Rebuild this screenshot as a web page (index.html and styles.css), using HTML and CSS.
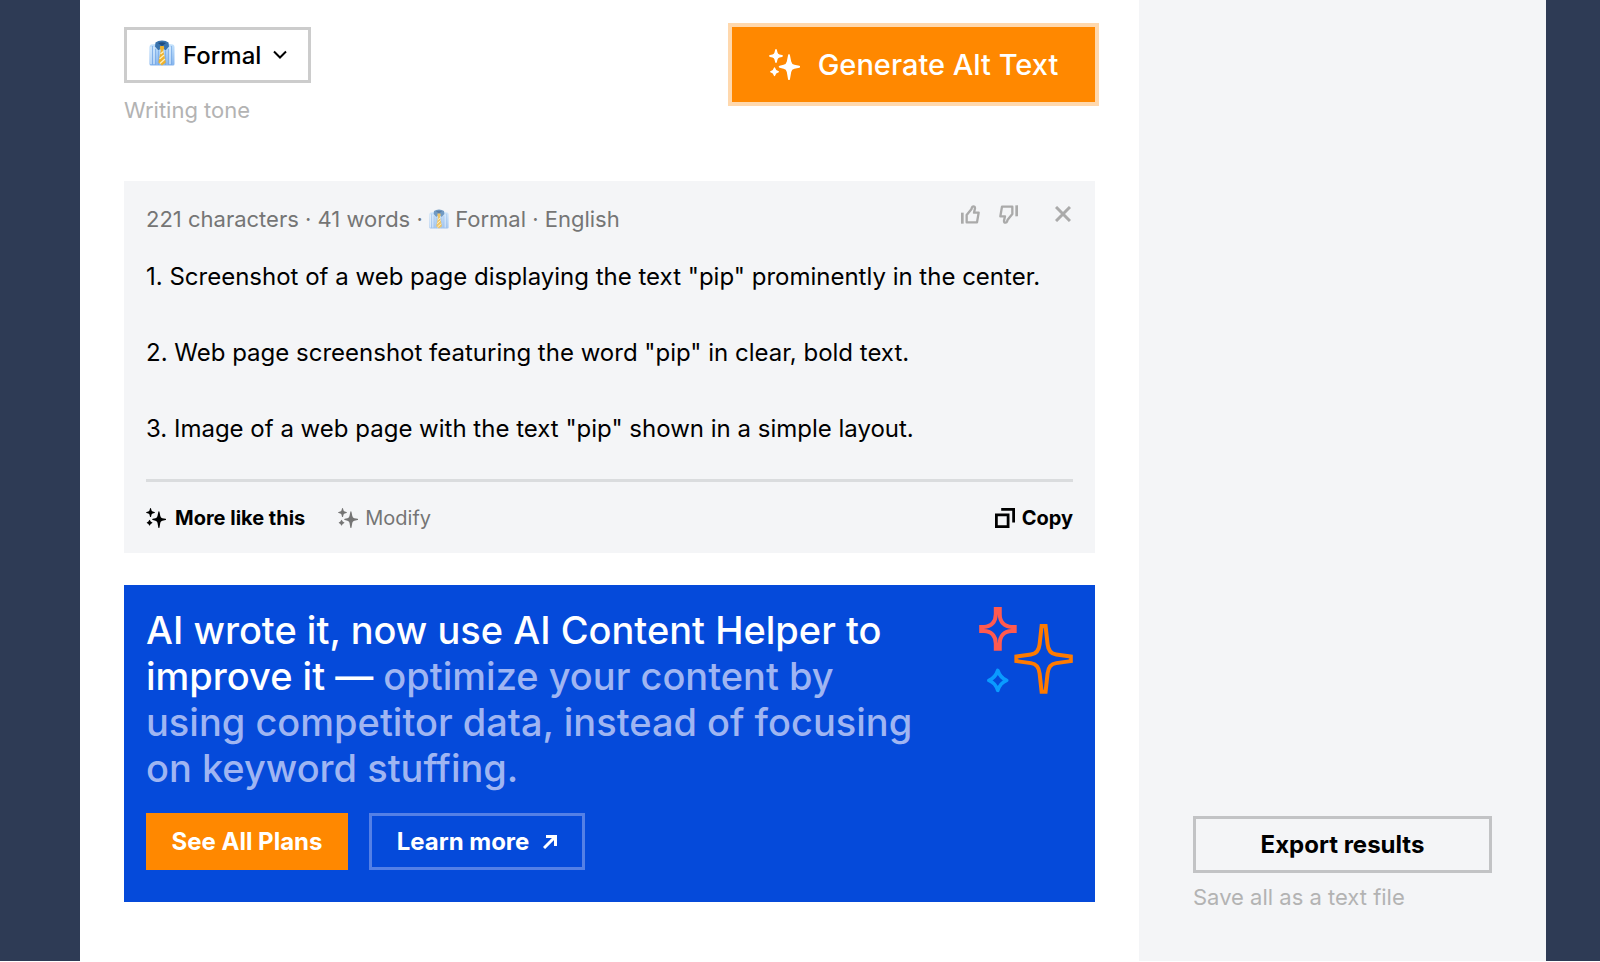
FILE: index.html
```html
<!DOCTYPE html>
<html lang="en">
<head>
    <meta charset="UTF-8">
    <meta name="viewport" content="width=device-width, initial-scale=1.0">
    <title>Alt Text Generator</title>
    <link rel="stylesheet" href="styles.css">
</head>
<body>
    <!-- Shared icons -->
    <svg class="sprite" aria-hidden="true">
        <defs>
            <linearGradient id="shirt-fill" x1="0" y1="0" x2="0" y2="1">
                <stop offset="0" stop-color="#c4e2fc"/>
                <stop offset="1" stop-color="#84b4ee"/>
            </linearGradient>
            <symbol id="icon-shirt" viewBox="0 0 26 26">
                <path fill="url(#shirt-fill)" d="M2 4.500 6 4h14l4 .5Q25.500 5 25.500 7v17q0 1.500-1.500 1.500H2Q.5 25.500.5 24V7Q.5 5 2 4.500z"/>
                <path stroke="#74a6e4" stroke-width=".7" d="M3.500 6v19M6.500 9v16M9.500 11v14M16.500 11v14M19.500 9v16M22.500 6v19"/>
                <path fill="#e4f1fd" d="M1.500 7h1v17h-1zM4.500 7h1v17h-1zM20.500 7h1v17h-1z"/>
                <path fill="#3a74ae" d="M6.500 2.500Q9 .5 13 .5t6.500 2l.5 4-3.500 4L13 7l-3.500 3.500L6 6.500z"/>
                <path fill="#1f4d80" d="M9 3Q13 1.500 17 3l-4 3z"/>
                <path fill="#eeb12c" d="M11.200 6h3.600l.4 2-1 2.500 2.600 12L13 25.500l-3.600-3 2.400-12-1-2.500z"/>
                <path stroke="#fff0ba" stroke-width="1.300" d="m11.500 14 3-2.500M10.500 19l4.500-4M11 23.500l5-4.500"/>
            </symbol>
            <symbol id="icon-sparkles" viewBox="0 0 31 31">
                <path d="M20 5q.8 0 1 1.500l1.200 6q.5 2.700 3.200 3.200l5 1q.8.300.8 1t-.8 1l-5 1q-2.700.5-3.200 3.200l-1.200 7q-.2 1.200-1 1.200t-1-1.200l-1.200-7q-.5-2.700-3.200-3.200l-4-1q-.9-.3-.9-1t.9-1l4-1q2.700-.5 3.200-3.200l1.200-6Q19.200 5 20 5z"/>
                <path d="M7 0q.7 0 .9 1l.6 2.500q.4 1.600 2 2l2.500.6q.9.200.9.900t-.9.900l-2.500.6q-1.600.4-2 2L7.900 13q-.2 1-.9 1t-.9-1l-.6-2.500q-.4-1.600-2-2L1 7.900Q.1 7.700.1 7t.9-.9l2.500-.6q1.600-.4 2-2L6.100 1Q6.300 0 7 0z"/>
                <path d="M5.500 18.300q.5 0 .7.700 .6 2.500 3 3.100.8.200.8.700t-.8.700q-2.400.6-3 3.100-.2.700-.7.700t-.7-.7q-.6-2.500-2.900-3.100-.8-.2-.8-.7t.8-.7q2.300-.6 2.900-3.100.2-.7.700-.7z"/>
            </symbol>
            <symbol id="icon-thumb" viewBox="0 0 57 57">
                <path fill="currentColor" d="M0 23h8v33H0z"/>
                <path fill="none" stroke="currentColor" stroke-width="7" stroke-linejoin="round" d="M17 30 31 13l2-6q1-3 4-3 5 0 5 6l-3 13h14l-5 29H17z"/>
            </symbol>
        </defs>
    </svg>

    <div class="page">
        <main class="content">
            <div class="toolbar">
                <div class="tone">
                    <div class="tone-field">
                        <svg class="tone-emoji" aria-hidden="true"><use href="#icon-shirt"/></svg>
                        <select id="tone" class="tone-select">
                            <option>Formal</option>
                        </select>
                        <svg class="tone-arrow" viewBox="0 0 14 10" aria-hidden="true"><path d="m1 1.500 6 6 6-6"/></svg>
                    </div>
                    <label for="tone" class="hint">Writing tone</label>
                </div>
                <button type="button" class="generate">
                    <svg aria-hidden="true"><use href="#icon-sparkles"/></svg>
                    Generate Alt Text
                </button>
            </div>

            <section class="result">
                <div class="result-head">
                    <p class="meta">221 characters · 41 words · <svg aria-hidden="true"><use href="#icon-shirt"/></svg> Formal · English</p>
                    <div class="rating">
                        <button type="button" aria-label="Good result"><svg><use href="#icon-thumb"/></svg></button>
                        <button type="button" aria-label="Bad result"><svg class="flipped"><use href="#icon-thumb"/></svg></button>
                        <button type="button" class="close" aria-label="Remove"><svg viewBox="0 0 16 16"><path d="m1 1 14 14M15 1 1 15"/></svg></button>
                    </div>
                </div>
                <div class="result-text">
                    <p>1. Screenshot of a web page displaying the text "pip" prominently in the center.</p>
                    <p>2. Web page screenshot featuring the word "pip" in clear, bold text.</p>
                    <p>3. Image of a web page with the text "pip" shown in a simple layout.</p>
                </div>
                <div class="result-actions">
                    <button type="button" class="action"><svg aria-hidden="true"><use href="#icon-sparkles"/></svg>More like this</button>
                    <button type="button" class="action muted"><svg aria-hidden="true"><use href="#icon-sparkles"/></svg>Modify</button>
                    <button type="button" class="action copy">
                        <svg viewBox="0 0 58 58" aria-hidden="true"><path d="M4 20h34v34H4zM18 4h36v38"/></svg>Copy
                    </button>
                </div>
            </section>

            <section class="promo">
                <div class="promo-top">
                    <h2>AI wrote it, now use AI Content Helper to improve it — <span>optimize your content by using competitor data, instead of focusing on keyword stuffing.</span></h2>
                    <svg class="promo-stars" viewBox="0 0 282 262" aria-hidden="true">
                        <path stroke="#ff5a4f" stroke-width="12" d="M50 6h12v16c0 23 14 38 36 38h9v12h-9c-22 0-36 15-36 38v16H50v-16c0-23-14-38-36-38H6V60h8c22 0 36-15 36-38z"/>
                        <path stroke="#ff7a00" stroke-width="12" d="M188 57h12l6 55q3 28 26 31l44 6v14l-44 6q-23 3-26 31l-6 55h-12l-6-55q-3-28-26-31l-44-6v-14l44-6q23-3 26-31z"/>
                        <path stroke="#0a9bff" stroke-width="11" stroke-linejoin="round" d="M56 191q7 22 27 30-20 8-27 30-7-22-27-30 20-8 27-30z"/>
                    </svg>
                </div>
                <div class="promo-buttons">
                    <a href="#" class="btn btn-orange">See All Plans</a>
                    <a href="#" class="btn btn-outline">Learn more <svg viewBox="0 0 14 14" aria-hidden="true"><path d="M1 13 12.500 1.500M3 1.500h9.500V11"/></svg></a>
                </div>
            </section>
        </main>

        <aside class="sidebar">
            <button type="button" class="export">Export results</button>
            <p class="hint">Save all as a text file</p>
        </aside>
    </div>
</body>
</html>
```
FILE: styles.css
```css
:root {
    --navy: #2e3b55;
    --orange: #ff8800;
    --blue: #054ada;
    --panel: #f4f5f7;
    --text-font: Inter, "Liberation Sans", sans-serif;
    --display-font: Inter, "Liberation Sans", sans-serif;
}

* {
    margin: 0;
    padding: 0;
    box-sizing: border-box;
}

body {
    font-family: var(--text-font);
    color: #000;
    background-color: #fff;
}

button,
select {
    font-family: var(--display-font);
    color: inherit;
    background: none;
    border: 0;
    cursor: pointer;
}

.sprite {
    position: absolute;
    width: 0;
    height: 0;
}

.page {
    display: flex;
    min-height: calc(100vh - 1px);
    padding: 0 54px 0 80px;
    background-color: var(--navy);
}

.content {
    flex: 1;
    padding: 27px 44px 0;
    background-color: #fff;
}

.sidebar {
    display: flex;
    flex-direction: column;
    justify-content: flex-end;
    width: 407px;
    padding: 0 54px 48px;
    background-color: var(--panel);
}

.hint {
    display: block;
    margin-top: 8px;
    font-size: 22px;
    line-height: 32px;
    color: #b3b3b3;
}

/* Toolbar */
.toolbar {
    display: flex;
    justify-content: space-between;
    align-items: flex-start;
    height: 154px;
}

.tone .hint {
    margin-top: 11px;
}

.tone-field {
    position: relative;
    width: 187px;
}

.tone-select {
    display: block;
    width: 100%;
    height: 56px;
    padding-left: 56px;
    border: 3px solid #ccc;
    font-size: 24px;
    font-weight: 500;
    appearance: none;
}

.tone-emoji {
    position: absolute;
    top: 13px;
    left: 25px;
    width: 26px;
    height: 26px;
}

.tone-arrow {
    position: absolute;
    top: 23px;
    right: 24px;
    width: 14px;
    height: 10px;
    fill: none;
    stroke: #000;
    stroke-width: 2;
    pointer-events: none;
}

.generate {
    display: flex;
    align-items: center;
    justify-content: center;
    gap: 18px;
    width: 363px;
    height: 75px;
    font-size: 29px;
    font-weight: 500;
    color: #fff;
    background-color: var(--orange);
    box-shadow: 0 0 0 4px #ffd8ad;
}

.generate svg {
    width: 31px;
    height: 31px;
    fill: currentColor;
}

/* Result card */
.result {
    padding: 20px 22px 0;
    background-color: var(--panel);
}

.result-head {
    display: flex;
    justify-content: space-between;
}

.meta {
    font-size: 22px;
    line-height: 36px;
    color: #757575;
}

.meta svg {
    width: 20px;
    height: 20px;
    vertical-align: -2px;
    opacity: 0.7;
}

.rating {
    display: flex;
    align-items: center;
    height: 26px;
    color: #aaa;
}

.rating button {
    display: flex;
    margin-right: 19px;
}

.rating svg {
    width: 19px;
    height: 19px;
}

.rating .flipped {
    transform: rotate(180deg);
}

.rating .close {
    margin: 0 2px 0 18px;
}

.rating .close svg {
    width: 16px;
    height: 16px;
    stroke: currentColor;
    stroke-width: 3;
}

.result-text {
    padding-bottom: 31px;
    border-bottom: 3px solid #dadcde;
}

.result-text p {
    margin-bottom: 38px;
    font-size: 24px;
    line-height: 38px;
}

.result-text p:first-child {
    margin-top: 21px;
}

.result-text p:last-child {
    margin-bottom: 0;
}

.result-actions {
    display: flex;
    align-items: center;
    gap: 33px;
    height: 71px;
}

.action {
    display: flex;
    align-items: center;
    gap: 9px;
    font-size: 20px;
    font-weight: 700;
}

.action svg {
    width: 20px;
    height: 20px;
    fill: currentColor;
}

.action.muted {
    gap: 7px;
    font-weight: 400;
    color: #757575;
}

.action.copy {
    gap: 7px;
    margin-left: auto;
}

.action.copy svg {
    fill: none;
    stroke: currentColor;
    stroke-width: 8;
}

/* Promo banner */
.promo {
    margin-top: 32px;
    padding: 22px 22px 32px;
    color: #fff;
    background-color: var(--blue);
}

.promo-top {
    display: flex;
    justify-content: space-between;
    align-items: flex-start;
}

.promo h2 {
    max-width: 790px;
    font-family: var(--display-font);
    font-size: 38px;
    font-weight: 500;
    line-height: 46px;
}

.promo h2 span {
    color: #9fb5f2;
}

.promo-stars {
    flex: none;
    width: 94px;
    height: 87px;
    fill: none;
}

.promo-buttons {
    display: flex;
    gap: 21px;
    margin-top: 22px;
}

.btn {
    display: flex;
    align-items: center;
    justify-content: center;
    height: 57px;
    font-family: var(--display-font);
    font-size: 24px;
    font-weight: 700;
    color: #fff;
    text-decoration: none;
}

.btn-orange {
    width: 202px;
    background-color: var(--orange);
}

.btn-outline {
    gap: 14px;
    width: 216px;
    border: 3px solid #5480e6;
}

.btn svg {
    width: 14px;
    height: 14px;
    fill: none;
    stroke: currentColor;
    stroke-width: 3;
}

/* Sidebar */
.export {
    height: 57px;
    border: 3px solid #c2c3c5;
    font-size: 24px;
    font-weight: 700;
}
```
